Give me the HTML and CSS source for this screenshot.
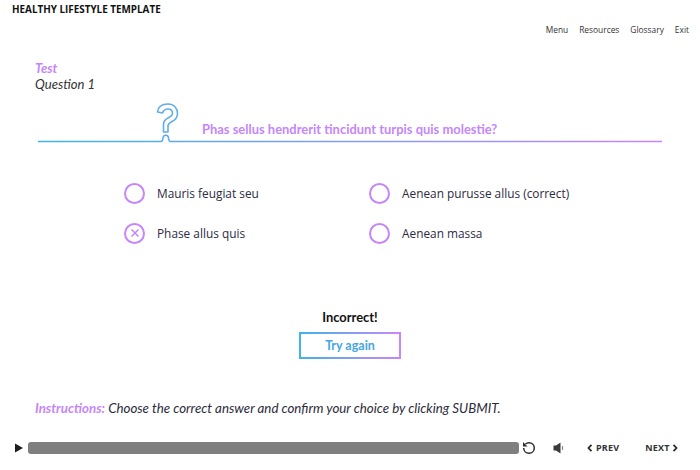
FILE: index.html
```html
<!DOCTYPE html>
<html lang="en">
<head>
<meta charset="utf-8">
<title>Healthy Lifestyle Template</title>
<link rel="stylesheet" href="styles.css">
</head>
<body>
<div class="page">
  <header class="header">
    <div class="course-title">HEALTHY LIFESTYLE TEMPLATE</div>
    <nav class="topnav"><span>Menu</span><span>Resources</span><span>Glossary</span><span>Exit</span></nav>
  </header>
  <section class="crumbs">
    <div class="crumb-test">Test</div>
    <div class="crumb-q">Question 1</div>
  </section>
  <section class="question">
    <svg class="question-art" width="626" height="42" viewBox="0 0 626 42">
      <defs>
        <linearGradient id="lg" gradientUnits="userSpaceOnUse" x1="0" y1="0" x2="626" y2="0">
          <stop offset="0" stop-color="#3fb4e8"/>
          <stop offset="1" stop-color="#c986fb"/>
        </linearGradient>
      </defs>
      <path d="M1 38.500H124C125.500 38.500 125.800 37 126 35C126.200 33 126.500 32.300 128.700 32.300C131 32.300 131.300 33 131.500 35C131.700 37 132 38.500 133.500 38.500H625" fill="none" stroke="url(#lg)" stroke-width="1.500"/>
      <path d="M120.500 9C121 4 125 1 131 1C137 1 140.500 5 140.500 10.500C140.500 15 138 17 135 18.500C132.500 19.800 131 21 131 23V29H126.500V21.500C126.500 18 128 16.500 131 15C134 13.500 135.500 12.500 135.500 10.500C135.500 7.500 133.500 6 131 6C128.500 6 126.500 7 125.500 10Z" fill="#fff" stroke="#62ade9" stroke-width="1.600" stroke-linejoin="round"/>
    </svg>
    <div class="question-text">Phas sellus hendrerit tincidunt turpis quis molestie?</div>
  </section>
  <section class="options">
    <div class="option"><span class="radio"></span><span>Mauris feugiat seu</span></div>
    <div class="option"><span class="radio"></span><span>Aenean purusse allus (correct)</span></div>
    <div class="option"><span class="radio"><svg width="24" height="24" viewBox="0 0 24 24"><path d="M8.500 8.500L15.500 15.500M15.500 8.500L8.500 15.500" stroke="#c586fb" stroke-width="1.500" fill="none"/></svg></span><span>Phase allus quis</span></div>
    <div class="option"><span class="radio"></span><span>Aenean massa</span></div>
  </section>
  <section class="feedback">
    <div class="feedback-text">Incorrect!</div>
    <div class="try-again">Try again</div>
  </section>
  <section class="instructions"><b>Instructions:</b> Choose the correct answer and confirm your choice by clicking SUBMIT.</section>
  <footer class="player">
    <svg class="play" width="10" height="10" viewBox="0 0 10 10"><path d="M1 0.500L9 5L1 9.500Z" fill="#1d1d1d"/></svg>
    <div class="progress"></div>
    <svg class="replay" width="14" height="14" viewBox="0 0 14 14"><path d="M3.500 3C4.500 2 5.600 1.700 7 1.700C10 1.700 12.300 4 12.300 7C12.300 10 10 12.300 7 12.300C4 12.300 1.700 10 1.700 7" fill="none" stroke="#2b2b2b" stroke-width="1.500"/><path d="M1 1V5.500H5.500Z" fill="#2b2b2b"/></svg>
    <svg class="volume" width="14" height="12" viewBox="0 0 14 12"><path d="M0.500 3.500H3L7.500 0.500V11.500L3 8.500H0.500Z" fill="#3a3a3a"/><path d="M9.500 4V8" stroke="#8a8a8a" stroke-width="1.200"/></svg>
    <div class="nav-btn prev"><svg width="6" height="8" viewBox="0 0 6 8"><path d="M4.500 0.800L1.500 4L4.500 7.200" fill="none" stroke="#2b2b2b" stroke-width="1.800"/></svg>PREV</div>
    <div class="nav-btn next">NEXT<svg width="6" height="8" viewBox="0 0 6 8"><path d="M1.500 0.800L4.500 4L1.500 7.200" fill="none" stroke="#2b2b2b" stroke-width="1.800"/></svg></div>
  </footer>
</div>
</body>
</html>
```
FILE: styles.css
```css
* { box-sizing: border-box; }
html, body { margin: 0; padding: 0; background: #fff; }
.page {
  width: 700px;
  height: 470px;
  display: flex;
  flex-direction: column;
  font-family: "Open Sans", sans-serif;
  color: #2b2b3a;
  overflow: hidden;
}
.header { height: 60px; padding: 2px 11px 0 12px; display: flex; flex-direction: column; }
.course-title { font-size: 9.900px; font-weight: 700; line-height: 14px; color: #111; }
.topnav { margin-top: 7px; align-self: flex-end; display: flex; gap: 11px; font-size: 8.400px; line-height: 14px; color: #333; }
.crumbs { padding-left: 35px; font-family: "Lato", sans-serif; font-style: italic; font-size: 13.100px; line-height: 16px; }
.crumb-test { color: #c586fb; font-weight: 700; }
.crumb-q { color: #333; }
.question { position: relative; margin: 11px 0 0 37px; height: 42px; width: 626px; }
.question-art { position: absolute; left: 0; top: 0; }
.question-text { position: relative; padding: 19px 0 0 165px; font-family: "Lato", sans-serif; font-weight: 700; font-size: 12.950px; line-height: 14px; color: #c586fb; }
.options { margin: 36px 0 0 124px; display: grid; grid-template-columns: 245px 1fr; row-gap: 16px; font-size: 11.850px; color: #2b2b44; }
.option { display: flex; align-items: center; gap: 12px; height: 24px; }
.radio { width: 21px; height: 21px; border: 2px solid #c586fb; border-radius: 50%; display: flex; align-items: center; justify-content: center; flex: none; }
.radio svg { flex: none; }
.feedback { margin-top: 64px; display: flex; flex-direction: column; align-items: center; font-family: "Lato", sans-serif; font-weight: 700; }
.feedback-text { font-size: 12.900px; line-height: 16px; color: #111; }
.try-again {
  margin-top: 7px;
  width: 102px;
  height: 27px;
  border: 2px solid;
  border-image: linear-gradient(90deg, #3fb4e8, #c986fb) 1;
  font-size: 12.500px;
  line-height: 24px;
  text-align: center;
  color: #45a6e3;
}
.instructions { margin: 41px 0 0 35px; font-family: "Lato", sans-serif; font-style: italic; font-size: 13.300px; line-height: 16px; color: #2b2b3a; }
.instructions b { color: #c586fb; }
.player { margin-top: 24px; padding-left: 14px; display: flex; align-items: center; height: 16px; font-size: 9px; font-weight: 700; color: #333; }
.play { margin-right: 4px; }
.progress { width: 491px; height: 12px; border-radius: 3px; background: #7f7f7f; }
.replay { margin-left: 3px; }
.volume { margin-left: 17px; }
.nav-btn { display: flex; align-items: center; gap: 3px; line-height: 14px; letter-spacing: 0.200px; }
.prev { margin-left: 20px; }
.next { margin-left: 26px; gap: 2px; }
```
